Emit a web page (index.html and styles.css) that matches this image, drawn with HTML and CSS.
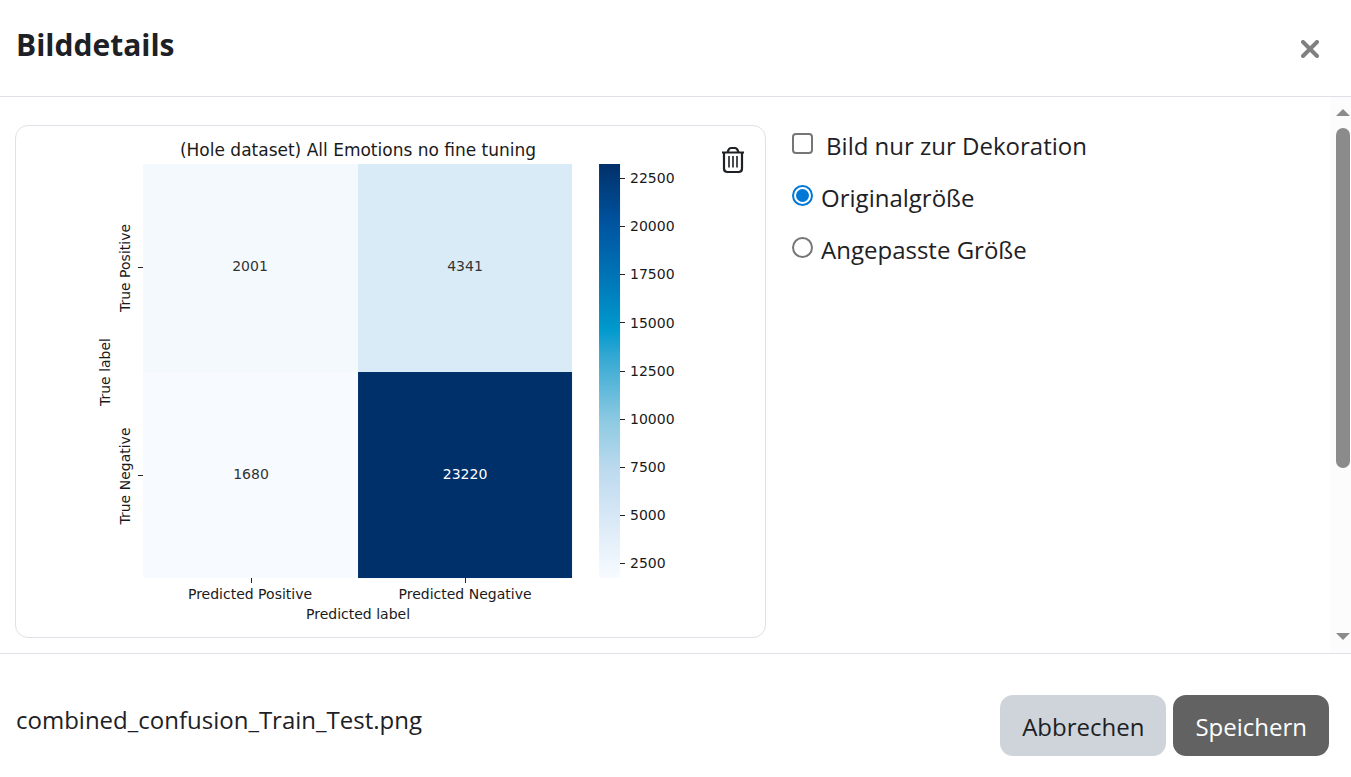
FILE: index.html
```html
<!DOCTYPE html>
<html lang="de">
<head>
    <meta charset="UTF-8">
    <meta name="viewport" content="width=device-width, initial-scale=1.0">
    <title>Bilddetails</title>
    <link rel="stylesheet" href="styles.css">
</head>
<body>
    <form class="modal">
        <header class="modal-header">
            <h1>Bilddetails</h1>
            <button type="button" class="close" aria-label="Schließen">
                <svg width="18" height="18" viewBox="0 0 18 18">
                    <path d="M2 2L16 16M16 2L2 16" stroke="#808080" stroke-width="4" stroke-linecap="round"/>
                </svg>
            </button>
        </header>

        <div class="modal-body">
            <div class="content">
                <div class="preview">
                    <svg class="chart" viewBox="0 0 749 511" role="img" aria-label="Confusion matrix">
                        <defs>
                            <linearGradient id="scale" x1="0" y1="0" x2="0" y2="1">
                                <stop offset="0" stop-color="#003069"/>
                                <stop offset="0.14" stop-color="#00539f"/>
                                <stop offset="0.28" stop-color="#0077b8"/>
                                <stop offset="0.40" stop-color="#009acd"/>
                                <stop offset="0.46" stop-color="#30a7d2"/>
                                <stop offset="0.62" stop-color="#8dcae2"/>
                                <stop offset="0.74" stop-color="#bddaee"/>
                                <stop offset="0.87" stop-color="#dbeaf7"/>
                                <stop offset="1" stop-color="#f7fbff"/>
                            </linearGradient>
                        </defs>
                        <text class="title" x="342" y="30">(Hole dataset) All Emotions no fine tuning</text>

                        <!-- matrix -->
                        <rect x="127" y="38" width="215" height="208" fill="#f4f9fe"/>
                        <rect x="342" y="38" width="214" height="208" fill="#daebf8"/>
                        <rect x="127" y="246" width="215" height="206" fill="#f7fbff"/>
                        <rect x="342" y="246" width="214" height="206" fill="#003069"/>
                        <g class="value">
                            <text x="234" y="145">2001</text>
                            <text x="449" y="145">4341</text>
                            <text x="235" y="353">1680</text>
                            <text class="light" x="449" y="353">23220</text>
                        </g>

                        <!-- axes -->
                        <path class="tick" d="M122 141h5M122 349h5M235 452v5M449 452v5"/>
                        <g class="label">
                            <text x="234" y="473">Predicted Positive</text>
                            <text x="449" y="473">Predicted Negative</text>
                            <text x="342" y="493">Predicted label</text>
                            <text transform="translate(114 142) rotate(-90)">True Positive</text>
                            <text transform="translate(114 350) rotate(-90)">True Negative</text>
                            <text transform="translate(94 246) rotate(-90)">True label</text>
                        </g>

                        <!-- color bar -->
                        <rect x="583" y="38" width="21" height="414" fill="url(#scale)"/>
                        <path class="tick" d="M604 52h5M604 100h5M604 148h5M604 196h5M604 245h5M604 293h5M604 341h5M604 389h5M604 437h5"/>
                        <g class="scale">
                            <text x="614" y="57">22500</text>
                            <text x="614" y="105">20000</text>
                            <text x="614" y="153">17500</text>
                            <text x="614" y="202">15000</text>
                            <text x="614" y="250">12500</text>
                            <text x="614" y="298">10000</text>
                            <text x="614" y="346">7500</text>
                            <text x="614" y="394">5000</text>
                            <text x="614" y="442">2500</text>
                        </g>
                    </svg>
                    <button type="button" class="delete" aria-label="Bild löschen">
                        <svg width="24" height="28" viewBox="0 0 24 28" fill="none" stroke="#1d2125">
                            <path d="M1 6.500H23M3 6.500V22.500Q3 26 6.500 26H17.500Q21 26 21 22.500V6.500" stroke-width="2.200"/>
                            <path d="M6.500 6L8 3Q8.500 2 10 2H14Q15.500 2 16 3L17.500 6" stroke-width="2.200"/>
                            <path d="M8 10V21.500M12 10V21.500M16 10V21.500" stroke-width="1.600"/>
                        </svg>
                    </button>
                </div>

                <div class="options">
                    <div class="option check">
                        <input type="checkbox" id="decorative" name="decorative">
                        <label for="decorative">Bild nur zur Dekoration</label>
                    </div>
                    <div class="option">
                        <input type="radio" id="original" name="size" checked>
                        <label for="original">Originalgröße</label>
                    </div>
                    <div class="option">
                        <input type="radio" id="custom" name="size">
                        <label for="custom">Angepasste Größe</label>
                    </div>
                </div>
            </div>

            <div class="scrollbar" aria-hidden="true">
                <div class="arrow up"></div>
                <div class="track"><div class="thumb"></div></div>
                <div class="arrow down"></div>
            </div>
        </div>

        <footer class="modal-footer">
            <span class="filename">combined_confusion_Train_Test.png</span>
            <div class="buttons">
                <button type="button" class="btn cancel">Abbrechen</button>
                <button type="submit" class="btn save">Speichern</button>
            </div>
        </footer>
    </form>
</body>
</html>
```

FILE: styles.css
```css
*{
    box-sizing: border-box;
    margin: 0px;
    padding: 0px;
}
body{
    font-family: "Open Sans", "Noto Sans", sans-serif;
    font-size: 24px;
    line-height: 36px;
    color: #1d2125;
    background: #fff;
}
button{
    font: inherit;
    border: none;
    background: none;
    cursor: pointer;
}
svg{
    display: block;
}
.modal{
    display: flex;
    flex-direction: column;
    min-height: 100vh;
}

/* header */
.modal-header{
    display: flex;
    justify-content: space-between;
    padding: 25px 32px 23px 16px;
    border-bottom: 1px solid #dee2e6;
}
h1{
    font-size: 30px;
    line-height: 40px;
    padding-bottom: 8px;
}
.close{
    align-self: center;
}

/* body */
.modal-body{
    display: flex;
    flex: 1;
}
.content{
    flex: 1;
    display: grid;
    grid-template-columns: 59fr 41fr;
    align-items: start;
    gap: 26px;
    padding: 28px 16px 15px 15px;
}
.preview{
    position: relative;
    border: 1px solid #dee2e6;
    border-radius: 13px;
}
.chart{
    width: 100%;
    font-family: "DejaVu Sans", sans-serif;
    font-size: 14px;
    fill: #1a1a1a;
}
.title{
    font-size: 17px;
    text-anchor: middle;
}
.value{
    fill: #333;
    text-anchor: middle;
}
.light{
    fill: #fff;
}
.label{
    text-anchor: middle;
}
.tick{
    stroke: #222;
    shape-rendering: crispEdges;
}
.delete{
    position: absolute;
    top: 20px;
    right: 20px;
}
.options{
    display: flex;
    flex-direction: column;
    gap: 16px;
    padding-top: 3px;
}
.option{
    display: flex;
    gap: 8px;
}
.check{
    gap: 13px;
}
.option input{
    appearance: none;
    width: 21px;
    height: 21px;
    margin-top: 5px;
    border: 2px solid #767676;
    border-radius: 50%;
}
.option input[type="checkbox"]{
    border-radius: 4px;
}
.option input:checked{
    border-color: #0078d7;
    background: #0078d7;
    background-clip: content-box;
    padding: 2px;
}

/* scrollbar */
.scrollbar{
    display: flex;
    flex-direction: column;
    width: 21px;
    padding: 12px 1px 13px 6px;
    background: #fcfcfc;
}
.arrow{
    height: 7px;
    background: #8b8b8b;
}
.up{
    clip-path: polygon(50% 0, 100% 100%, 0 100%);
}
.down{
    clip-path: polygon(0 0, 100% 0, 50% 100%);
}
.track{
    flex: 1;
    padding: 12px 0;
}
.thumb{
    height: 69%;
    min-height: 20px;
    border-radius: 7px;
    background: #8b8b8b;
}

/* footer */
.modal-footer{
    display: flex;
    justify-content: space-between;
    align-items: center;
    padding: 41px 22px 21px 16px;
    border-top: 1px solid #dee2e6;
}
.filename{
    padding-bottom: 12px;
}
.buttons{
    display: flex;
    gap: 7px;
}
.btn{
    padding: 14px 22px 11px;
    border-radius: 13px;
}
.cancel{
    color: #1d2125;
    background: #ced4da;
}
.save{
    color: #fff;
    background: #626262;
}
```
